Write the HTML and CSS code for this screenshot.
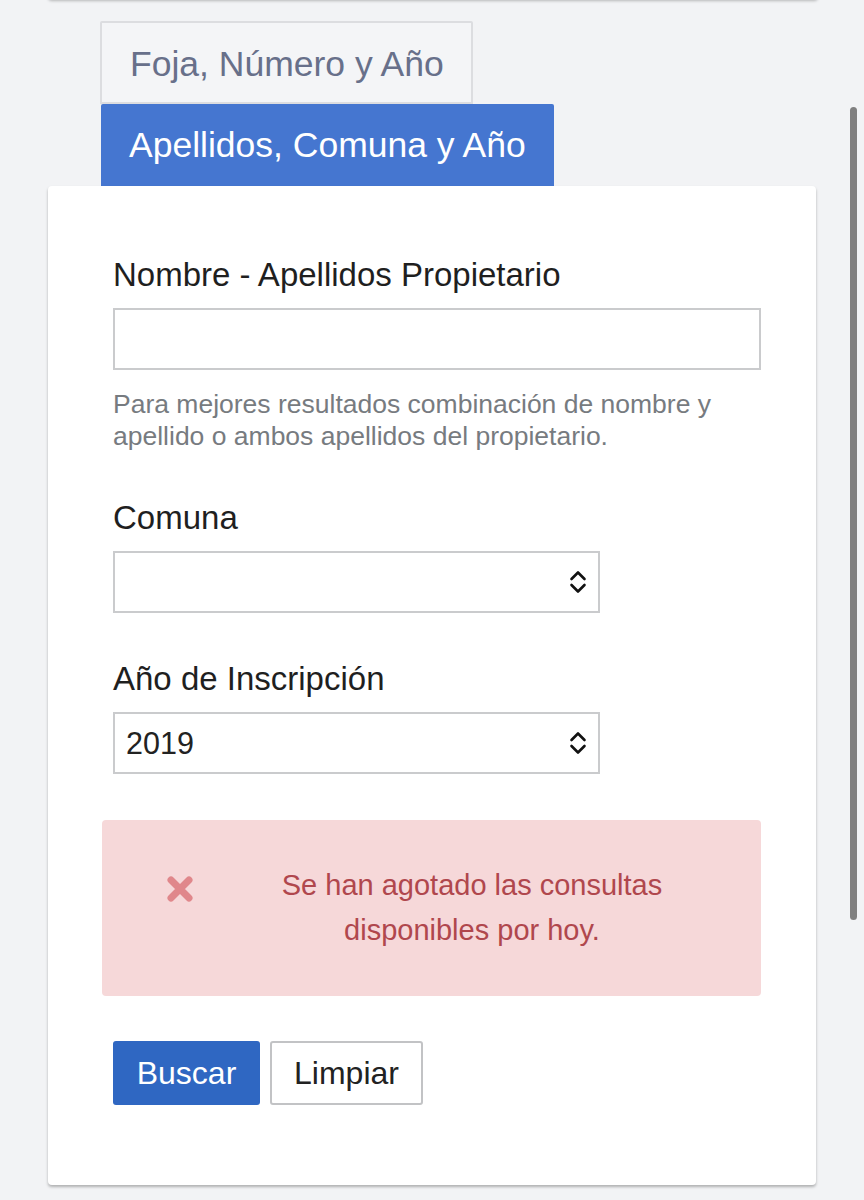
FILE: index.html
```html
<!DOCTYPE html>
<html lang="es">
<head>
  <meta charset="UTF-8">
  <title>Búsqueda de inscripciones</title>
  <meta name="viewport" content="width=device-width, initial-scale=1.0">
  <link rel="stylesheet" href="styles.css">
</head>
<body>

<div class="page">
  <div class="top-card"></div>

  <ul class="tabs">
    <li class="tab">Foja, Número y Año</li>
    <li class="tab active">Apellidos, Comuna y Año</li>
  </ul>

  <section class="card">
    <div class="field">
      <label for="nombre">Nombre - Apellidos Propietario</label>
      <input type="text" id="nombre" class="control">
      <p class="help">Para mejores resultados combinación de nombre y apellido o ambos apellidos del propietario.</p>
    </div>

    <div class="field">
      <label for="comuna">Comuna</label>
      <div class="select">
        <span class="select-value"></span>
        <svg class="chevrons" viewBox="0 0 20 26" width="20" height="26">
          <path d="M3.5 10 L10 3.5 L16.5 10 M3.5 16 L10 22.5 L16.5 16" fill="none" stroke="#111" stroke-width="2.6" stroke-linecap="round" stroke-linejoin="round"/>
        </svg>
      </div>
    </div>

    <div class="field">
      <label for="anio">Año de Inscripción</label>
      <div class="select">
        <span class="select-value">2019</span>
        <svg class="chevrons" viewBox="0 0 20 26" width="20" height="26">
          <path d="M3.5 10 L10 3.5 L16.5 10 M3.5 16 L10 22.5 L16.5 16" fill="none" stroke="#111" stroke-width="2.6" stroke-linecap="round" stroke-linejoin="round"/>
        </svg>
      </div>
    </div>

    <div class="alert">
      <svg class="alert-icon" viewBox="0 0 30 30" width="30" height="30">
        <path d="M6 6 L24 24 M24 6 L6 24" stroke="#e0878b" stroke-width="7" stroke-linecap="round"/>
      </svg>
      <p class="alert-text">Se han agotado las consultas disponibles por hoy.</p>
    </div>

    <div class="actions">
      <button class="btn btn-primary">Buscar</button>
      <button class="btn btn-default">Limpiar</button>
    </div>
  </section>
</div>

<div class="scrollbar"></div>

</body>
</html>
```

FILE: styles.css
```css
:root {
  --blue: #4576d0;
  --btn-blue: #2f67c2;
  --text: #1f1f1f;
  --muted: #777b80;
  --page-bg: #f2f3f5;
}

body {
  margin: 0;
  background: var(--page-bg);
  font-family: 'Liberation Sans', Arial, sans-serif;
  color: var(--text);
}

.page {
  width: 768px;
  margin-left: 48px;
  padding-bottom: 40px;
}

.top-card {
  height: 30px;
  margin-top: -30px;
  margin-right: -2px;
  background: #fff;
  border-radius: 0 0 4px 4px;
  box-shadow: 0 1px 3px rgba(0,0,0,0.25);
}

.tabs {
  list-style: none;
  margin: 21px 0 0 52px;
  padding: 0;
}

.tab {
  display: inline-block;
  box-sizing: border-box;
  height: 83px;
  line-height: 83px;
  padding: 0 27px 0 28px;
  font-size: 35.5px;
  color: #68708a;
  background: #f4f5f7;
  border: 2px solid #dcdde0;
  border-radius: 2px 2px 0 0;
}

.tab.active {
  display: block;
  width: 453px;
  height: 82px;
  line-height: 82px;
  margin-left: 1px;
  color: #fff;
  background: var(--blue);
  border: none;
  padding: 0 28px;
  white-space: nowrap;
}

.card {
  background: #fff;
  border-radius: 4px;
  box-shadow: 0 2px 3px rgba(0,0,0,0.28);
  padding: 69px 55px 80px 54px;
}

.field {
  margin-left: 11px;
  margin-bottom: 46px;
}

label {
  display: block;
  font-size: 33px;
  line-height: 40px;
  margin-bottom: 13px;
}

.control {
  display: block;
  box-sizing: border-box;
  width: 100%;
  height: 62px;
  border: 2px solid #cacbcd;
  border-radius: 0;
  font-size: 30px;
  padding: 0 12px;
  background: #fff;
}

.help {
  margin: 18px 0 0;
  font-size: 26.5px;
  line-height: 32px;
  color: var(--muted);
}

.select {
  box-sizing: border-box;
  width: 487px;
  height: 62px;
  border: 2px solid #cacbcd;
  display: flex;
  align-items: center;
  justify-content: space-between;
  padding: 0 10px 0 11px;
}

.select-value {
  font-size: 30.5px;
  color: #222;
}

.alert {
  display: flex;
  align-items: center;
  margin: 0 0 45px;
  height: 176px;
  box-sizing: border-box;
  padding: 0 0 0 63px;
  background: #f6d8d9;
  border-radius: 4px;
}

.alert-icon {
  flex: none;
  margin-top: -38px;
}

.alert-text {
  flex: none;
  width: 440px;
  margin: 0 0 0 57px;
  text-align: center;
  font-size: 29px;
  line-height: 45px;
  color: #b0474d;
}

.actions {
  display: flex;
  gap: 10px;
  margin-left: 11px;
}

.btn {
  height: 64px;
  font-family: 'Liberation Sans', Arial, sans-serif;
  font-size: 32px;
  border-radius: 3px;
  cursor: pointer;
}

.btn-primary {
  width: 147px;
  color: #fff;
  background: var(--btn-blue);
  border: none;
}

.btn-default {
  width: 153px;
  color: #222;
  background: #fff;
  border: 2px solid #c2c3c5;
}

.scrollbar {
  position: absolute;
  top: 107px;
  left: 850px;
  width: 7px;
  height: 813px;
  background: #808080;
  border-radius: 4px;
}
```
